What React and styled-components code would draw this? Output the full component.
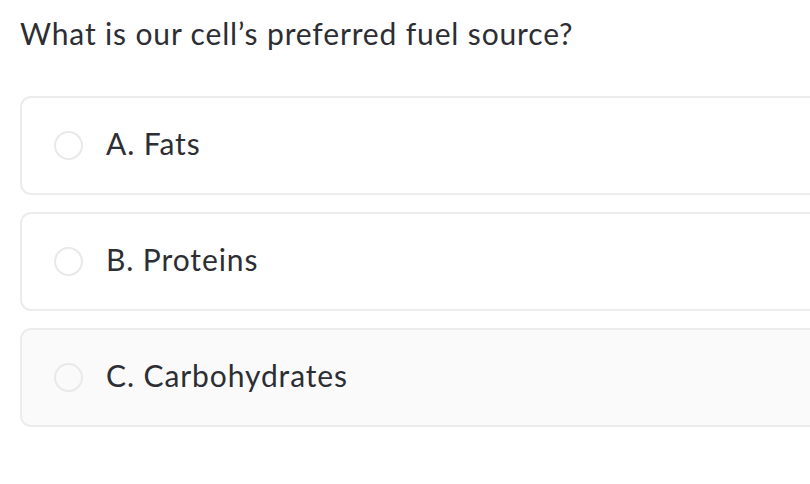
import React, { useState } from "react"
import styled, { createGlobalStyle } from "styled-components"

const GlobalStyle = createGlobalStyle`
  html, body {
    margin: 0;
    padding: 0;
    background: #ffffff;
    overflow: hidden;
  }
  body {
    font-family: Lato, "Open Sans", Arial, sans-serif;
    color: #2c2e33;
  }
`

const Page = styled.div`
  padding: 13px 0 0 20px;
  width: 1000px;
`

const Question = styled.h1`
  margin: 0 0 43px 0;
  font-size: 30px;
  font-weight: 400;
  line-height: 40px;
  letter-spacing: 0.85px;
`

const Options = styled.div`
  display: flex;
  flex-direction: column;
  gap: 17px;
`

const Option = styled.label`
  display: flex;
  align-items: center;
  height: 95px;
  padding-left: 32px;
  border: 2px solid #ececec;
  border-radius: 11px;
  background: ${p => (p.$hover ? "#fafafa" : "#ffffff")};
  cursor: pointer;
`

const Radio = styled.span`
  width: 25px;
  height: 25px;
  border: 2px solid #e9e9ea;
  border-radius: 50%;
  background: ${p => (p.$checked ? "#2c2e33" : "transparent")};
  flex-shrink: 0;
`

const OptionText = styled.span`
  margin-left: 23px;
  padding-bottom: 5px;
  font-size: 30px;
  letter-spacing: 0.9px;
`

const answers = ["A. Fats", "B. Proteins", "C. Carbohydrates"]

const App = () => {
  const [picked, setPicked] = useState(null)

  return (
    <Page>
      <GlobalStyle />
      <Question>What is our cell’s preferred fuel source?</Question>
      <Options>
        {answers.map((a, i) => (
          <Option key={a} $hover={i === 2} onClick={() => setPicked(i)}>
            <Radio $checked={picked === i} />
            <OptionText>{a}</OptionText>
          </Option>
        ))}
      </Options>
    </Page>
  )
}

export default App
